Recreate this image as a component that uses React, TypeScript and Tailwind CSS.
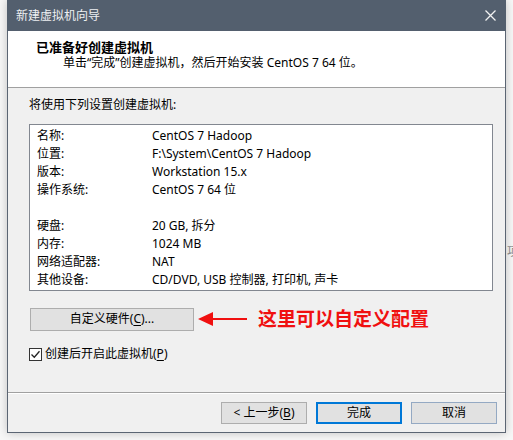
import React from "react";

const font = { fontFamily: '"Noto Sans", "Noto Sans CJK SC", sans-serif' };

const rows: [string, string][] = [
  ["名称:", "CentOS 7 Hadoop"],
  ["位置:", "F:\\System\\CentOS 7 Hadoop"],
  ["版本:", "Workstation 15.x"],
  ["操作系统:", "CentOS 7 64 位"],
  ["", ""],
  ["硬盘:", "20 GB, 拆分"],
  ["内存:", "1024 MB"],
  ["网络适配器:", "NAT"],
  ["其他设备:", "CD/DVD, USB 控制器, 打印机, 声卡"],
];

function Arrow() {
  return (
    <svg width="49" height="16" viewBox="0 0 49 16" className="shrink-0">
      <polygon points="0,8 15,1 15,15" fill="#f01010" />
      <rect x="14" y="7" width="35" height="2" fill="#f01010" />
    </svg>
  );
}

function Checkbox() {
  return (
    <span className="flex h-[13px] w-[13px] shrink-0 items-center justify-center border border-[#333] bg-white">
      <svg width="11" height="11" viewBox="0 0 11 11">
        <path d="M1.5 5.5 L4.3 8.3 L9.5 2.3" fill="none" stroke="#222" strokeWidth="1.3" />
      </svg>
    </span>
  );
}

export default function App() {
  return (
    <div className="flex h-[440px] w-[513px] overflow-hidden bg-[#f7f7f7] pl-[7px] text-[12px] text-black" style={font}>
      <div className="flex h-[433px] w-[499px] shrink-0 flex-col border-x border-b border-[#5b6573] bg-[#f0f0f0] shadow-[0_0_9px_rgba(0,0,0,0.22)]">
        <div className="-mx-px flex h-[31px] shrink-0 items-center justify-between bg-[#535f6e] pl-[9px] pr-[10px] text-[#eef0f2]">
          <span className="leading-4">新建虚拟机向导</span>
          <svg width="11" height="11" viewBox="0 0 11 11">
            <path d="M0.5 0.5 L10.5 10.5 M10.5 0.5 L0.5 10.5" stroke="#f2f2f2" strokeWidth="1.3" />
          </svg>
        </div>

        <div className="h-[56px] shrink-0 bg-white pl-[28px] pt-[8px]">
          <div className="text-[13px] font-bold leading-4">已准备好创建虚拟机</div>
          <div className="pl-[27px] leading-4">单击“完成”创建虚拟机，然后开始安装 CentOS 7 64 位。</div>
        </div>
        <div className="h-px shrink-0 bg-[#a0a0a0]" />

        <div className="flex h-[304px] shrink-0 flex-col pl-[21px] pt-[9px]">
          <div className="leading-4">将使用下列设置创建虚拟机:</div>
          <div className="mt-[11px] h-[167px] w-[464px] border border-[#828790] bg-white pl-[7px] pt-[2px]">
            {rows.map(([k, v], i) => (
              <div key={i} className="flex h-[18px] items-center leading-4">
                <span className="w-[115px] shrink-0">{k}</span>
                <span>{v}</span>
              </div>
            ))}
          </div>

          <div className="ml-px mt-[16px] flex items-center">
            <button className="flex h-[23px] w-[164px] items-center justify-center border border-[#adadad] bg-[#e1e1e1] leading-4">
              自定义硬件(<span className="underline underline-offset-2">C</span>)...
            </button>
            <div className="ml-[4px]">
              <Arrow />
            </div>
            <span className="ml-[11px] text-[19px] font-bold leading-6 text-[#f01010]">这里可以自定义配置</span>
          </div>

          <div className="mt-[15px] flex h-4 items-center gap-[3px]">
            <Checkbox />
            <span className="leading-4">
              创建后开启此虚拟机(<span className="underline underline-offset-2">P</span>)
            </span>
          </div>
        </div>

        <div className="h-px shrink-0 bg-[#a0a0a0]" />
        <div className="h-px shrink-0 bg-white" />

        <div className="flex h-[38px] shrink-0 justify-end gap-[9px] pr-[8px] pt-[8px]">
          <button className="flex h-[22px] w-[86px] items-center justify-center border border-[#adadad] bg-[#e1e1e1] leading-4">
            &lt; 上一步(<span className="underline underline-offset-2">B</span>)
          </button>
          <button className="flex h-[22px] w-[86px] items-center justify-center border-2 border-[#0078d7] bg-[#e1e1e1] leading-4">
            完成
          </button>
          <button className="flex h-[22px] w-[86px] items-center justify-center border border-[#94a9c3] bg-[#e1e1e1] leading-4">
            取消
          </button>
        </div>
      </div>
      <div className="w-[7px] shrink-0 overflow-hidden pt-[244px] text-[#888]">
        <span className="ml-[1px] block w-[14px] leading-4">项</span>
      </div>
    </div>
  );
}
